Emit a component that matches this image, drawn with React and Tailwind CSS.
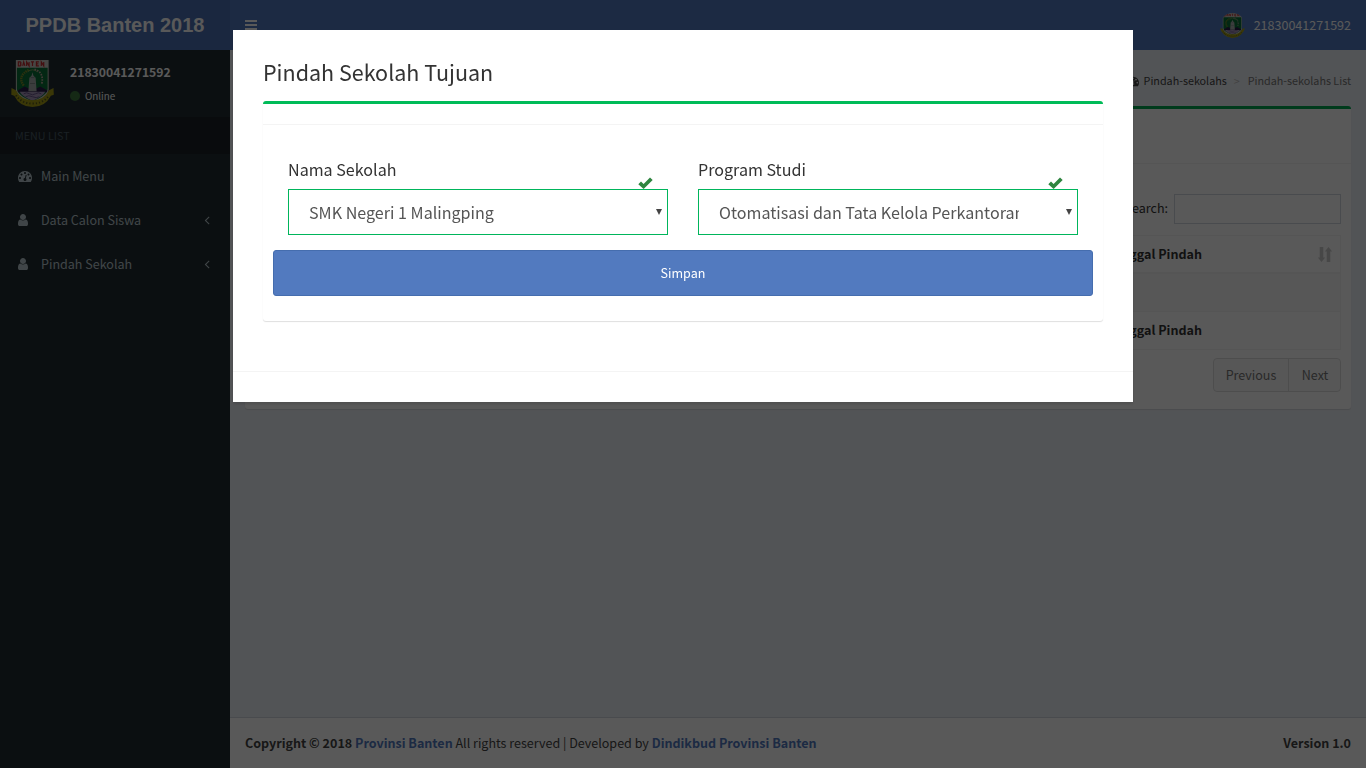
const DASH = "M384 1152q0-53-37.5-90.5t-90.5-37.5-90.5 37.5-37.5 90.5 37.5 90.5 90.5 37.5 90.5-37.5 37.5-90.5zm192-448q0-53-37.5-90.5t-90.5-37.5-90.5 37.5-37.5 90.5 37.5 90.5 90.5 37.5 90.5-37.5 37.5-90.5zm428 481l101-382q6-26-7.5-48.5t-38.5-29.5-48 6.5-30 39.5l-101 382q-60 5-107 43.5t-63 98.5q-20 77 20 146t117 89 146-20 89-117q16-60-6-117t-72-91zm660-33q0-53-37.5-90.5t-90.5-37.5-90.5 37.5-37.5 90.5 37.5 90.5 90.5 37.5 90.5-37.5 37.5-90.5zm-640-640q0-53-37.5-90.5t-90.5-37.5-90.5 37.5-37.5 90.5 37.5 90.5 90.5 37.5 90.5-37.5 37.5-90.5zm448 192q0-53-37.5-90.5t-90.5-37.5-90.5 37.5-37.5 90.5 37.5 90.5 90.5 37.5 90.5-37.5 37.5-90.5zm320 448q0 261-141 483-19 29-54 29h-1402q-35 0-54-29-141-221-141-483 0-182 71-348t191-286 286-191 348-71 348 71 286 191 191 286 71 348z";
const USER = "M1536 1399q0 109-62.5 187t-150.5 78h-854q-88 0-150.5-78t-62.5-187q0-85 8.5-160.5t31.5-152 58.5-131 94-89 134.5-34.5q131 128 313 128t313-128q76 0 134.5 34.5t94 89 58.5 131 31.5 152 8.5 160.5zm-256-887q0 159-112.5 271.5t-271.5 112.5-271.5-112.5-112.5-271.5 112.5-271.5 271.5-112.5 271.5 112.5 112.5 271.5z";
const ANGLE = "M1203 544q0 13-10 23l-393 393 393 393q10 10 10 23t-10 23l-50 50q-10 10-23 10t-23-10l-466-466q-10-10-10-23t10-23l466-466q10-10 23-10t23 10l50 50q10 10 10 23z";

function Icon({ d, className }) {
  return (
    <svg viewBox="0 0 1792 1792" fill="currentColor" className={className}>
      <path d={d} />
    </svg>
  );
}

function Emblem({ className }) {
  return (
    <svg viewBox="0 0 44 48" preserveAspectRatio="none" className={className}>
      <path d="M5 0h33.500v30q0 8-16.700 14Q5 38 5 30z" fill="#c9c9c2" />
      <path d="M6 8h31.500v21q0 7-15.700 13Q6 36 6 29z" fill="#0a7038" />
      <path d="M7.500 2h2l.8 1-.8 1 .8 1-.8 1h-2zM12 6l1-4 1.200 4M16 6V2l2.500 4V2M20.500 2h3M22 2v4M28.500 2h-2.500v4h2.500M26 4h2M31 6V2l2.500 4V2" fill="none" stroke="#c2282c" strokeWidth="1.200" />
      <path d="M13 26Q6 17 18 10" fill="none" stroke="#7f8a27" strokeWidth="2.400" strokeDasharray="1.500 .8" />
      <path d="M17 12q5-4 10 0" fill="none" stroke="#7f9a57" strokeWidth="1" />
      <path d="M24 9.500q10 3 7.500 15" fill="none" stroke="#b9a39a" strokeWidth="1.800" strokeDasharray="1.600 1.200" />
      <path d="M7 31l7-4 4 2 4-2 4 2 4-2 7 4v2H7z" fill="#2a1c48" />
      <path d="M9 32.500h26q-2 5-13 9-11-4-13-9z" fill="#a898bd" />
      <path d="M13 34.500q3-2 6 0t6 0 6 0M15 37.500q3-2 7 0t7 0" fill="none" stroke="#67548a" strokeWidth="1" />
      <path d="M17.800 32l1-14 2.200-2 1-3.500 1 3.500 2.200 2 1 14z" fill="#a9b0b0" />
      <path d="M20 18h4M19.500 24h5" stroke="#808888" strokeWidth="1" />
      <path d="M.5 28.500l4.500 2.500Q10 41 22 41t17-10l4.500-2.500.3 7-3 1Q35 48 22 48T3.300 36.500l-3-1z" fill="#a69f16" />
      <path d="M5 36q6 8.500 17 8.500T39 36" fill="none" stroke="#55581c" strokeWidth="2" strokeDasharray="1.300 2" />
    </svg>
  );
}

function MenuRow({ icon, label, arrow }) {
  return (
    <div className="flex h-11 items-center pl-[18px] pr-4 text-[#b8c7ce]">
      <span className="flex w-[23px] shrink-0 items-center">
        <Icon d={icon} className={icon === USER ? "-ml-[2px] h-[14px] w-[14px]" : "h-[14px] w-[14px]"} />
      </span>
      <span className="grow text-[12.540px] leading-5">{label}</span>
      {arrow && <Icon d={ANGLE} className="h-[14px] w-[14px]" />}
    </div>
  );
}

function Sidebar() {
  return (
    <aside className="flex w-[230px] shrink-0 flex-col bg-[#222d32]">
      <div className="flex h-[67px] items-start pl-[11px] pt-[10px]">
        <Emblem className="h-[47px] w-[43px]" />
        <div className="ml-4 pt-[2px] text-white">
          <p className="text-[12.200px] font-semibold leading-5">21830041271592</p>
          <p className="mt-[5px] flex items-center text-[9.850px] leading-[18px]">
            <span className="mr-[5px] h-[10px] w-[10px] rounded-full bg-[#3c763d]" />
            Online
          </p>
        </div>
      </div>
      <div className="h-[37px] bg-[#1a2226] pl-[15px] text-[10.750px] leading-[37px] text-[#4b5c66]">MENU LIST</div>
      <MenuRow icon={DASH} label="Main Menu" />
      <MenuRow icon={USER} label="Data Calon Siswa" arrow />
      <MenuRow icon={USER} label="Pindah Sekolah" arrow />
    </aside>
  );
}

function TopBar() {
  return (
    <header className="flex h-[50px] shrink-0 bg-[#527abf] text-white">
      <div className="w-[230px] bg-[#4a70b4] text-center font-['Liberation_Sans',sans-serif] text-[20px] font-bold leading-[50px]">
        PPDB Banten 2018
      </div>
      <div className="flex grow items-center justify-between pl-[15px] pr-[15px]">
        <svg viewBox="0 0 12 10" className="h-[10px] w-3" fill="currentColor">
          <path d="M0 0h12v2H0zM0 4h12v2H0zM0 8h12v2H0z" />
        </svg>
        <div className="flex items-center">
          <Emblem className="mr-[9px] h-[25px] w-[25px] rounded-full" />
          <span className="text-[12.540px] leading-5">21830041271592</span>
        </div>
      </div>
    </header>
  );
}

function TransferBox() {
  return (
    <section className="mx-[15px] h-[303px] rounded-[3px] border-t-[3px] border-[#00a850] bg-white shadow-[0_1px_1px_rgba(0,0,0,0.1)]">
      <div className="h-[55px] border-b border-[#f4f4f4]" />
      <div className="px-[10px] pt-[30px]">
        <div className="flex items-center justify-end text-[12.540px]">
          <span className="pb-[2px]">Search:</span>
          <div className="ml-[6px] h-[30px] w-[167px] border border-[#d2d6de]" />
        </div>
        <div className="mt-[11px] border border-[#f4f4f4] text-[12.540px] font-bold text-[#333]">
          <div className="flex h-[38px] items-center border-b-2 border-[#f4f4f4]">
            <div className="w-[851px]" />
            <span className="grow">Tanggal Pindah</span>
            <svg viewBox="0 0 14 15" className="mr-2 h-[15px] w-[14px] text-[#ccc]" fill="currentColor">
              <path d="M1.700 0h3.600v10.500H7.200L3.500 15-.2 10.500h1.900zM8.700 15h3.600V4.500h1.900L10.500 0 6.800 4.500h1.900z" />
            </svg>
          </div>
          <div className="h-[38px] border-b border-[#f4f4f4] bg-[#f9f9f9]" />
          <div className="flex h-[37px] items-center">
            <div className="w-[851px]" />
            <span>Tanggal Pindah</span>
          </div>
        </div>
        <div className="mt-2 flex justify-end text-[12.540px] text-[#777]">
          <div className="flex h-[34px] items-center rounded-[4px] border border-[#ddd] bg-[#fafafa]">
            <span className="flex h-full w-[75px] items-center justify-center border-r border-[#ddd]">Previous</span>
            <span className="w-[51px] pl-px text-center">Next</span>
          </div>
        </div>
      </div>
    </section>
  );
}

function Field({ label, value }) {
  return (
    <div className="w-[380px]">
      <div className="flex h-[29px] justify-between">
        <span className="text-[16.100px] leading-[18px] text-[#333]">{label}</span>
        <svg viewBox="0 0 15 12" className="mr-[15px] mt-[17px] h-3 w-[15px]" fill="#2f8540">
          <path d="M.3 7.300L3 4.600l2.600 2.300L12 .6l2.700 2.500-9.100 8.900z" />
        </svg>
      </div>
      <div className="flex h-[46px] items-center border border-[#00b55b] pl-5 pr-[5px] text-[16.100px] text-[#555]">
        <span className="w-[300px] overflow-hidden whitespace-nowrap leading-6">{value}</span>
        <svg viewBox="0 0 6 6" className="ml-auto h-[6px] w-[6px]" fill="#444">
          <path d="M0 0h6L3 6z" />
        </svg>
      </div>
    </div>
  );
}

function Modal() {
  return (
    <div className="fixed inset-0 flex items-start justify-center bg-black/65 pt-[30px]">
      <div className="h-[372px] w-[900px] bg-white shadow-[0_2px_3px_rgba(0,0,0,0.125)]">
        <div className="h-[341px] px-[30px] pt-[30px]">
          <h3 className="h-[41px] text-[21.500px] leading-6 text-[#333]">Pindah Sekolah Tujuan</h3>
          <div className="h-[220px] rounded-[3px] border-t-[3px] border-[#00bb58] shadow-[0_1px_1px_rgba(0,0,0,0.13)]">
            <div className="h-[21px] border-b border-[#f4f4f4]" />
            <div className="flex justify-between px-[25px] pt-[35px]">
              <Field label="Nama Sekolah" value="SMK Negeri 1 Malingping" />
              <Field label="Program Studi" value="Otomatisasi dan Tata Kelola Perkantoran" />
            </div>
            <button className="mx-[10px] mt-[15px] block h-[46px] w-[820px] rounded-[3px] border border-[#456dae] bg-[#527abf] text-[12.540px] text-white">
              Simpan
            </button>
          </div>
        </div>
        <div className="h-[31px] border-t border-[#f4f4f4]" />
      </div>
    </div>
  );
}

export default function App() {
  return (
    <div className="flex h-screen flex-col overflow-hidden font-['Noto_Sans_CJK_SC',sans-serif] text-[#333]">
      <TopBar />
      <div className="flex min-h-0 grow">
        <Sidebar />
        <main className="flex grow flex-col bg-[#ecf0f5]">
          <div className="flex h-[56px] items-center justify-end pr-[15px] pt-[6px] text-[10.750px] text-[#444]">
            <Icon d={DASH} className="mr-[5px] h-3 w-3" />
            <span>Pindah-sekolahs</span>
            <span className="ml-[7px] mr-2 text-[#bbb]">&gt;</span>
            <span className="text-[#777]">Pindah-sekolahs List</span>
          </div>
          <TransferBox />
          <footer className="mt-auto flex h-[51px] items-center justify-between border-t border-[#d2d6de] bg-white px-[15px] text-[12.540px] text-[#444]">
            <span>
              <b>Copyright © 2018 <span className="text-[#527abf]">Provinsi Banten</span></b> All rights reserved | Developed by <b className="text-[#527abf]">Dindikbud Provinsi Banten</b>
            </span>
            <b>Version 1.0</b>
          </footer>
        </main>
      </div>
      <Modal />
    </div>
  );
}
